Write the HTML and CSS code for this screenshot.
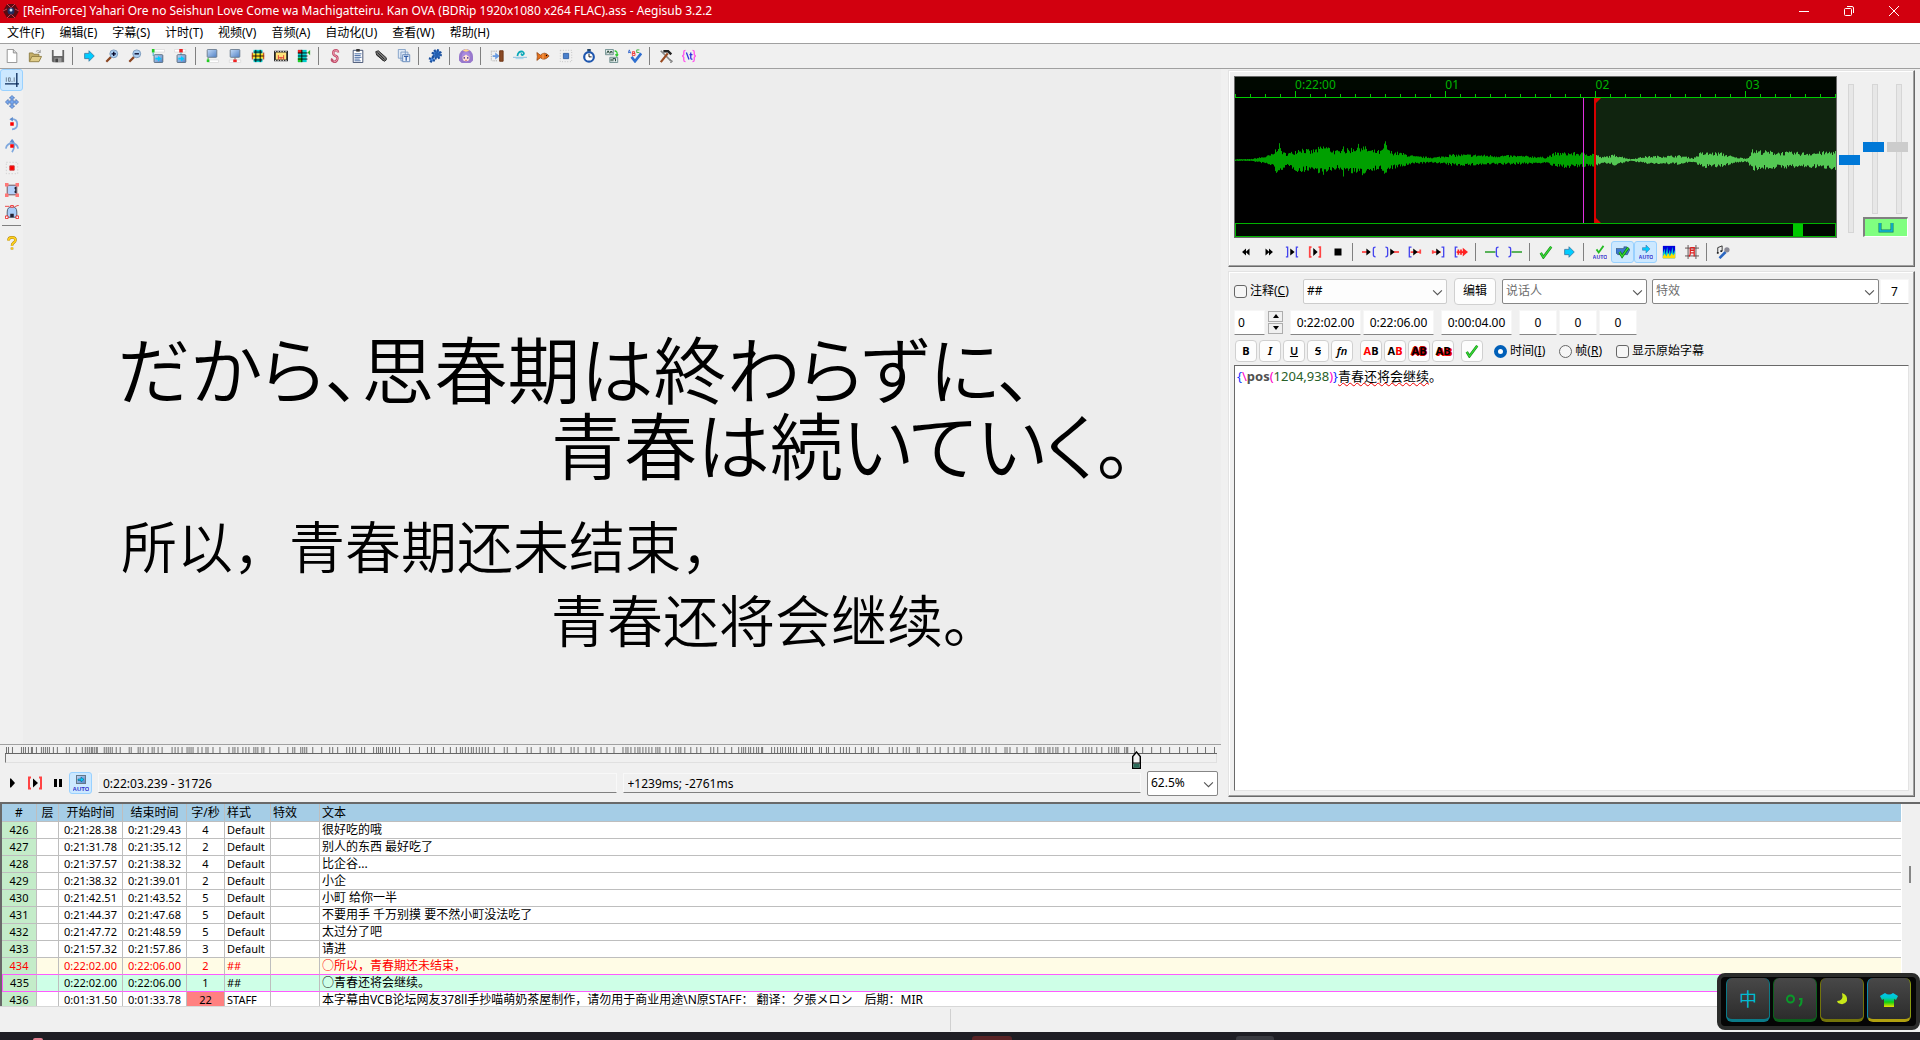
FILE: index.html
```html
<!DOCTYPE html>
<html lang="zh-CN">
<head>
<meta charset="utf-8">
<title>Aegisub 3.2.2</title>
<link rel="stylesheet" href="styles.css">
</head>
<body>
<svg class="defs" aria-hidden="true">
  <defs>
    <linearGradient id="g-blue" x1="0" y1="0" x2="1" y2="1"><stop offset="0" stop-color="#c4dcf8"/><stop offset="1" stop-color="#4f7fc4"/></linearGradient>
    <linearGradient id="g-shirt" x1="0" y1="0" x2="0" y2="1"><stop offset="0" stop-color="#00c8f0"/><stop offset=".35" stop-color="#00c8c8"/><stop offset=".65" stop-color="#10d010"/><stop offset="1" stop-color="#f0e000"/></linearGradient>
  </defs>
  <symbol id="i-arrow" viewBox="0 0 16 16"><path d="M3 5h5V2l6 6-6 6v-3H3z" fill="#00ccff" stroke="#3a7fa8"/></symbol>
  <symbol id="i-check" viewBox="0 0 16 16"><path d="M2 9l3 5L14 2" fill="none" stroke="#178a17" stroke-width="3"/><path d="M2 9l3 5L14 2" fill="none" stroke="#35d835" stroke-width="1.500"/></symbol>
  <symbol id="i-playline" viewBox="0 0 16 16"><path d="M4 2.500H2v11h2M12 2.500h2v11h-2" fill="none" stroke="#f44" stroke-width="2"/><path d="M6 3.500l5 4.500-5 4.500z"/></symbol>
  <symbol id="i-loupe" viewBox="0 0 16 16"><path d="M1.500 14.500L7 9" stroke="#8a4420" stroke-width="2.500"/><circle cx="10" cy="5.500" r="4.500" fill="#a9cdf0" stroke="#7796b8"/></symbol>
  <symbol id="i-chev" viewBox="0 0 10 10"><path d="M1 3l4 4 4-4" fill="none" stroke="#555"/></symbol>
</svg>

<header class="titlebar">
  <svg class="logo" viewBox="0 0 16 16"><path d="M4 1h8l4 7-4 7H4L0 8z" fill="#5a0a10"/><path d="M4 1l4 4 4-4M0 8l4-2M16 8l-4-2M4 15l4-4 4 4" stroke="#d04050" fill="none"/><circle cx="8" cy="8" r="3.500" fill="#222d60"/><circle cx="8" cy="7" r="1.500" fill="#cfe0f0"/></svg>
  <h1>[ReinForce] Yahari Ore no Seishun Love Come wa Machigatteiru. Kan OVA (BDRip 1920x1080 x264 FLAC).ass - Aegisub 3.2.2</h1>
  <button aria-label="最小化"><svg viewBox="0 0 10 10"><path d="M0 5.500h10" stroke="#fff"/></svg></button>
  <button aria-label="还原"><svg viewBox="0 0 10 10"><path d="M.5 3.500q0-1 1-1h5q1 0 1 1v5q0 1-1 1h-5q-1 0-1-1zM3 .5h5q1.500 0 1.500 1.500v5" fill="none" stroke="#fff"/></svg></button>
  <button aria-label="关闭"><svg viewBox="0 0 10 10"><path d="M0 0l10 10M10 0L0 10" stroke="#fff"/></svg></button>
</header>

<nav class="menubar">
  <a href="#">文件(F)</a><a href="#">编辑(E)</a><a href="#">字幕(S)</a><a href="#">计时(T)</a><a href="#">视频(V)</a><a href="#">音频(A)</a><a href="#">自动化(U)</a><a href="#">查看(W)</a><a href="#">帮助(H)</a>
</nav>

<div class="tools main-tools" role="toolbar">
  <button aria-label="新建"><svg viewBox="0 0 16 16"><path d="M2.500.5h7l4 4v11h-11z" fill="#fff" stroke="#888"/><path d="M9.500.5v4h4" fill="#ddd" stroke="#888"/></svg></button>
  <button aria-label="打开"><svg viewBox="0 0 16 16"><path d="M1.500 14V4.500h4l1 1.500h6v3" fill="#c4ae68" stroke="#8c7a40"/><path d="M1.500 14.500l3-6h11l-3 6z" fill="#e0cc88" stroke="#8c7a40"/><path d="M9 3q3-3 5 1m0-3v3h-3" fill="none" stroke="#999"/></svg></button>
  <button aria-label="保存"><svg viewBox="0 0 16 16"><path d="M1 1h14v14H2l-1-1z" fill="#666"/><path d="M3 1h10v7H3z" fill="#f4f4f4"/><path d="M4 10h8v5H4z" fill="#999"/><path d="M5 11h3v4H5z" fill="#444"/></svg></button>
  <i class="sep"></i>
  <button aria-label="跳转"><svg><use href="#i-arrow"/></svg></button>
  <button aria-label="放大"><svg viewBox="0 0 16 16"><use href="#i-loupe"/><path d="M7.500 5.500h5M10 3v5" stroke="#002" stroke-width="1.500"/></svg></button>
  <button aria-label="缩小"><svg viewBox="0 0 16 16"><use href="#i-loupe"/><path d="M7.500 5.500h5" stroke="#002" stroke-width="1.500"/></svg></button>
  <button aria-label="跳到开始"><svg viewBox="0 0 16 16"><path d="M3.500.5h12v3h-12z" fill="#fff" stroke="#ddd"/><path d="M1 0h3v4H1z" fill="#2c2"/><path d="M2.500 4v4" stroke="#2ac"/><rect x="3.500" y="6.500" width="10" height="9" rx="1" fill="url(#g-blue)" stroke="#567"/><path d="M5 10h3V8l4 3-4 3v-2H5z" fill="#0cf"/></svg></button>
  <button aria-label="跳到结束"><svg viewBox="0 0 16 16"><path d="M.5.5h13v3H.5z" fill="#fff" stroke="#ddd"/><path d="M6 0h4v4H6z" fill="#e22"/><path d="M8 4v4" stroke="#2ac"/><rect x="3.500" y="6.500" width="10" height="9" rx="1" fill="url(#g-blue)" stroke="#567"/><path d="M5 10h3V8l4 3-4 3v-2H5z" fill="#0cf"/></svg></button>
  <i class="sep"></i>
  <button aria-label="开始设为当前"><svg viewBox="0 0 16 16"><rect x="2.500" y=".5" width="11" height="9" rx="1" fill="url(#g-blue)" stroke="#678"/><path d="M3.500 10v3" stroke="#2a2"/><path d="M4.500 12.500h11v3h-11z" fill="#fff" stroke="#ddd"/><path d="M2 12h3v3H2z" fill="#2c2"/></svg></button>
  <button aria-label="结束设为当前"><svg viewBox="0 0 16 16"><rect x="2.500" y=".5" width="11" height="9" rx="1" fill="url(#g-blue)" stroke="#678"/><path d="M8 10v3" stroke="#555"/><path d="M1.500 12.500h13v3h-13z" fill="#fff" stroke="#ddd"/><path d="M6 12h4v3H6z" fill="#e22"/></svg></button>
  <button aria-label="选择可见"><svg viewBox="0 0 16 16"><path d="M3 1h10v14H3z" fill="#0cc"/><path d="M1 5h14v6H1z" fill="#fd2"/><path d="M3 3.500h10M1 8h14M3 12.500h10M5.500 1v14M10.500 1v14" stroke="#000"/><path d="M1.500 4v8M14.500 4v8" stroke="#a22"/></svg></button>
  <button aria-label="对齐场景"><svg viewBox="0 0 16 16"><path d="M0 2h16v12H0z" fill="#222"/><path d="M2 4h12v8H2z" fill="#ffe27a"/><path d="M1 3h14M1 13h14" stroke="#fff" stroke-dasharray="1.500 1.500"/><path d="M5 7v5M11 7v5M8 9v3M5 10h6" stroke="#d33"/></svg></button>
  <button aria-label="移位到帧"><svg viewBox="0 0 16 16"><path d="M1 1h10v14H1z" fill="#0cc"/><path d="M1 1h5v4H1z" fill="#e22"/><path d="M1 10h5v5H1z" fill="#2c2"/><path d="M1 4.500h11M1 8h11M1 11.500h11M5.500 1v14" stroke="#000"/><path d="M15 1v6l-3-3z" fill="#2a2"/></svg></button>
  <i class="sep"></i>
  <button aria-label="样式管理"><svg viewBox="0 0 16 16"><path d="M11.500 4q0-3-3-2.500-2.500.5-2.500 3t3 3.500q2.500 1 1.500 4t-4 2.500q-3-1-1.500-3.500" fill="none" stroke="#c0506c" stroke-width="2.800"/><path d="M11.500 4q0-3-3-2.500-2.500.5-2.500 3t3 3.500q2.500 1 1.500 4t-4 2.500" fill="none" stroke="#f4a0b4"/></svg></button>
  <button aria-label="脚本属性"><svg viewBox="0 0 16 16"><path d="M2.500 1.500h11v14h-11z" fill="#fff" stroke="#346"/><path d="M6 0h4v3H6z" fill="#333"/><path d="M4 5.500h8M4 7.500h7M4 9.500h8M4 11.500h6M4 13.500h7" stroke="#335a9a"/></svg></button>
  <button aria-label="附件"><svg viewBox="0 0 16 16"><path d="M2 3l3-1 9 8q1 3-2 4L3 7z" fill="#777" stroke="#222"/><path d="M4 4l8 8M3 6l8 8" stroke="#222"/></svg></button>
  <button aria-label="字体"><svg viewBox="0 0 16 16"><path d="M1.500.5h8v10h-8zM4.500 3.500h8v10h-8z" fill="#dfe9f6" stroke="#7a9ac4"/><path d="M6.500 6.500h8v8h-8z" fill="#e9f1fb" stroke="#5d82b6"/><path d="M8 8.500h5M10.500 8.500v5" stroke="#3560a8" stroke-width="1.500"/></svg></button>
  <i class="sep"></i>
  <button aria-label="自动化"><svg viewBox="0 0 16 16"><circle cx="10" cy="6" r="4.500" fill="#3a7ad0" stroke="#1a4f9c" stroke-width="3" stroke-dasharray="2 1.500"/><circle cx="4.500" cy="12" r="2.500" fill="#4a8ae0" stroke="#1a4f9c" stroke-width="2.500" stroke-dasharray="2 1.500"/><path d="M10 3v6M8 6h5" stroke="#235fb0" stroke-width="3"/></svg></button>
  <i class="sep"></i>
  <button aria-label="助手"><svg viewBox="0 0 16 16"><path d="M0 13Q-1 1 8 0q9 1 8 13l-3 3H3z" fill="#9878cc"/><circle cx="8" cy="10" r="4" fill="#ffe3d6"/><path d="M3 9Q3 3 8 3q5 0 5 6-3 0-5-3-2 3-5 3z" fill="#a98adf"/><path d="M6 9v2M10 9v2" stroke="#5a3a9a" stroke-width="1.500"/><path d="M4 2l4-2 4 2-4 1z" fill="#ffd88a"/><path d="M7 13h2" stroke="#d66"/></svg></button>
  <i class="sep"></i>
  <button aria-label="平移时间"><svg viewBox="0 0 16 16"><path d="M1.500 2v12M3 2.500h5M3 13.500h5" stroke="#999" stroke-dasharray="1 1"/><path d="M3 7h3V4l5 4-5 4V9H3z" fill="#6a9be0"/><path d="M11 2h4v12h-4z" fill="#8a4a26" stroke="#6a3010"/></svg></button>
  <button aria-label="时间后续处理"><svg viewBox="0 0 16 16"><path d="M0 9.500h16" stroke="#78b8dc"/><path d="M5 8q1-6 6-5 3 2 0 4-2 0-1-2" fill="none" stroke="#0aa8b8" stroke-width="2"/><path d="M3 11h9" stroke="#9ad0ec"/></svg></button>
  <button aria-label="卡拉OK计时"><svg viewBox="0 0 16 16"><path d="M1 4l4 3q5-5 10 1-5 6-10 2l-4 3q1-4 0-9z" fill="#e4701c" stroke="#8a3c08" stroke-width=".8"/><path d="M8 5v7" stroke="#fbb46a"/><circle cx="12" cy="7.500" r=".8"/></svg></button>
  <button aria-label="分辨率重设"><svg viewBox="0 0 16 16"><path d="M1.500 1.500h13v13h-13z" fill="none" stroke="#bbb" stroke-dasharray="1 2"/><path d="M5 5h6v6H5z" fill="#4a80cc" stroke="#2f5fa4"/></svg></button>
  <button aria-label="计时"><svg viewBox="0 0 16 16"><path d="M6 0h4v3H6z" fill="#246"/><circle cx="8" cy="9" r="5.500" fill="#fff" stroke="#1e56ae" stroke-width="2.500"/><path d="M8 5.500V9h3" fill="none" stroke="#000"/></svg></button>
  <button aria-label="翻译"><svg viewBox="0 0 16 16"><path d="M.5.500h9v6h-9zM5.500 9.500h9v6h-9z" fill="#dfe9ea" stroke="#688"/><path d="M2 5l1.500-3L5 5M6 5V3h2v2M7 11v3M9 14v-3h3v3" fill="none" stroke="#132"/><path d="M11 2q4 1 2.500 5M12 6l1.500 2L15 6" fill="none" stroke="#3c3" stroke-width="1.500"/></svg></button>
  <button aria-label="拼写检查"><svg viewBox="0 0 16 16"><path d="M4 9l4 5 7-9" fill="none" stroke="#2f6fd0" stroke-width="3"/><path d="M0 5l1.500-4L3 5M.7 4h2" fill="none" stroke="#36c"/><path d="M5 3h2.500v2H5zM5 5h3v2.500H5z" fill="none" stroke="#e33"/><path d="M13 1h-3v3h3" fill="none" stroke="#3a3"/></svg></button>
  <i class="sep"></i>
  <button aria-label="选项"><svg viewBox="0 0 16 16"><path d="M2 2l12 12" stroke="#888" stroke-width="2"/><path d="M12 12l3 2-2 2" fill="none" stroke="#888" stroke-width="1.500"/><path d="M2 15l8-10" stroke="#9a4a20" stroke-width="2.500"/><path d="M5 1h6l4 4-2 2-3-3H5z" fill="#222"/></svg></button>
  <button aria-label="标签显示"><svg viewBox="0 0 16 16"><path d="M4 1.500q-2 0-2 2v3L.5 8 2 9.500v3q0 2 2 2M12 1.500q2 0 2 2v3L15.500 8 14 9.500v3q0 2-2 2" fill="none" stroke="#f5e" stroke-width="1.500"/><path d="M5 4l3 8M10 4v6q0 2 2 1.500M8.500 6.500H12" fill="none" stroke="#33d" stroke-width="1.500"/></svg></button>
</div>

<main class="work">
  <section class="left">
    <div class="stage">
      <div class="side" role="toolbar">
        <button class="on" aria-label="标准"><svg viewBox="0 0 16 16"><path d="M0 12.500h16M13.500 0v16" stroke="#0a2a5a" stroke-width="1.500"/><path d="M1.500 5v5M4 5.500h2v4H4zM8 9v1M10.500 5v5" fill="none" stroke="#678"/></svg></button>
        <button aria-label="拖动"><svg viewBox="0 0 16 16"><path d="M8 .5l3 3H9.200v3.300h3.300V5l3 3-3 3V9.200H9.200v3.300H11l-3 3-3-3h1.800V9.200H3.500V11l-3-3 3-3v1.800h3.300V3.500H5z" fill="#78a8ee" stroke="#456fb0" stroke-width=".8"/></svg></button>
        <button aria-label="旋转Z"><svg viewBox="0 0 16 16"><path d="M7 2q7 0 7 6t-6 6" fill="none" stroke="#7fa8de" stroke-width="2"/><path d="M9 0L5 2.500 9 5z" fill="#5f8ccc"/><path d="M6 6h4v4H6z" fill="#f00"/></svg></button>
        <button aria-label="旋转XY"><svg viewBox="0 0 16 16"><path d="M1 11q1-6 7-6t7 6M8 1q5 7 0 14" fill="none" stroke="#7fa8de" stroke-width="2"/><path d="M5 4l3-4 3 4z" fill="#5f8ccc"/><path d="M6 6h4v4H6z" fill="#f00"/></svg></button>
        <button aria-label="缩放"><svg viewBox="0 0 16 16"><path d="M1.500 1.500h13v13h-13z" fill="none" stroke="#ccc" stroke-dasharray="1.500 2"/><path d="M5.500 5.500h5v5h-5z" fill="#f00" stroke="#c33"/></svg></button>
        <button aria-label="矩形裁剪"><svg viewBox="0 0 16 16"><path d="M2.500 2.500h11v11h-11z" fill="#b4d2fb" stroke="#644"/><path d="M13 4q-4 1-1 4-3 3 1 4z" fill="#223"/><path d="M0 0h4v4H0zM12 0h4v4h-4zM0 12h4v4H0zM12 12h4v4h-4z" fill="#f77"/></svg></button>
        <button aria-label="矢量裁剪"><svg viewBox="0 0 16 16"><path d="M2.500 14V8q0-6 5.500-6t5.500 6v6z" fill="#a9ccf8" stroke="#456"/><path d="M0 1.500h5M11 2l5-2" stroke="#e33"/><path d="M6 10h4v4H6z" fill="#223"/><path d="M6.500.5h3v2h-3zM.5 12.500h3v3h-3zM12.500 12.500h3v3h-3z" fill="#fff" stroke="#e22"/></svg></button>
        <i class="rule"></i>
        <button aria-label="帮助"><svg viewBox="0 0 16 16"><path d="M4 5q0-3.500 4-3.500t4 3q0 2-2.500 3.500Q8 9 8 11M8 13v2.500" fill="none" stroke="#a87c10" stroke-width="3"/><path d="M4 5q0-3.500 4-3.500t4 3q0 2-2.500 3.500Q8 9 8 11M8 13v2.500" fill="none" stroke="#ffd21c" stroke-width="2"/></svg></button>
      </div>
      <div class="video">
        <p class="jp" lang="ja">だから、思春期は終わらずに、</p>
        <p class="jp second" lang="ja">青春は続いていく。</p>
        <p class="cn gap">所以，青春期还未结束，</p>
        <p class="cn second">青春还将会继续。</p>
      </div>
    </div>
    <div class="seek">
      <svg class="keys" viewBox="0 0 1215 7" preserveAspectRatio="none"><path id="keyframes" stroke="#666" fill="none"/></svg>
      <div class="groove"></div>
      <svg class="knob" viewBox="0 0 9 18"><path d="M.7 17.300V5.500L4.500 1l3.800 4.500v11.800z" fill="#f4f4f4" stroke="#000" stroke-width="1.400"/><path d="M1.400 12.500h6.200v4.200H1.400z" fill="#2a6a58"/><path d="M1 12h7" stroke="#000"/></svg>
    </div>
    <div class="transport">
      <button aria-label="播放"><svg viewBox="0 0 16 16"><path d="M6 3.500h1l4 4.500-4 4.500H6z"/></svg></button>
      <button aria-label="播放当前行"><svg><use href="#i-playline"/></svg></button>
      <button aria-label="暂停"><svg viewBox="0 0 16 16"><path d="M4 4h3v8H4zM9 4h3v8H9z"/></svg></button>
      <button class="on" aria-label="自动滚动"><svg viewBox="0 0 16 16"><rect x="3.500" y=".5" width="9" height="8" fill="url(#g-blue)" stroke="#678"/><path d="M5 4h3V2l3 2.500L8 7V5.500H5z" fill="#0cf" stroke="#057" stroke-width=".5"/><text x="8" y="15.500" class="auto">AUTO</text></svg></button>
      <input class="status" aria-label="时间" readonly value="0:22:03.239 - 31726">
      <input class="status" aria-label="偏移" readonly value="+1239ms; -2761ms">
      <span class="combo zoom"><select aria-label="缩放"><option>62.5%</option></select><svg><use href="#i-chev"/></svg></span>
    </div>
  </section>

  <section class="right">
    <div class="frame audio">
      <div class="audio-top">
        <div class="display">
          <div class="ruler"><span></span><span>0:22:00</span><span>01</span><span>02</span><span>03</span></div>
          <svg class="wave" viewBox="0 0 601 133" preserveAspectRatio="none">
            <path d="M360 8h241v125H360z" fill="#10240f"/>
            <path id="ticks" stroke="#00c800" fill="none"/>
            <path d="M0 7.500h601" stroke="#00c800"/>
            <path id="wave-a" stroke="#00a000" fill="none"/>
            <path id="wave-b" stroke="#54c854" fill="none"/>
            <path d="M348.500 8v125" stroke="#e030e0"/>
            <path d="M360 8v125" stroke="#d80000" stroke-width="2"/>
            <path d="M360 8h6l-6 6zM360 127l6 6h-6z" fill="#e00000"/>
          </svg>
          <div class="overview"><i></i></div>
        </div>
        <div class="sliders">
          <label class="vs tall"><input type="range" aria-label="水平缩放"><i></i></label>
          <label class="vs"><input type="range" aria-label="垂直缩放"><i></i></label>
          <label class="vs off"><input type="range" aria-label="音量" disabled><i></i></label>
          <button class="link" aria-label="关联"><svg viewBox="0 0 16 12"><path d="M2 1v8h12V1" fill="none" stroke="#176" stroke-width="3"/><path d="M2 1v8h12V1" fill="none" stroke="#1bd" stroke-width="1.500"/></svg></button>
        </div>
      </div>
      <div class="tools" role="toolbar">
        <button aria-label="上一行"><svg viewBox="0 0 16 16"><path d="M8 4v8L3.500 8zM12 4v8L7.500 8z"/></svg></button>
        <button aria-label="下一行"><svg viewBox="0 0 16 16"><path d="M4 4l4.500 4L4 12zM8 4l4.500 4L8 12z"/></svg></button>
        <button aria-label="播放选区"><svg viewBox="0 0 16 16"><path d="M1 2.500h2v11H1M15 2.500h-2v11h2" fill="none" stroke="#44e" stroke-width="1.500"/><path d="M6 4l5 4-5 4z"/></svg></button>
        <button aria-label="播放当前行"><svg><use href="#i-playline"/></svg></button>
        <button aria-label="停止"><svg viewBox="0 0 16 16"><path d="M4 4h8v8H4z"/></svg></button>
        <i class="sep"></i>
        <button aria-label="选区前"><svg viewBox="0 0 16 16"><path d="M0 8h9" stroke="#f44" stroke-width="2"/><path d="M5 4l5 4-5 4z"/><path d="M15.500 2.500q-2.500 0-2.500 2V8v3.500q0 2 2.500 2" fill="none" stroke="#44e" stroke-width="1.500"/></svg></button>
        <button aria-label="选区后"><svg viewBox="0 0 16 16"><path d="M7 8h9" stroke="#f44" stroke-width="2"/><path d="M6 4l5 4-5 4z"/><path d="M.5 2.500q2.500 0 2.500 2v7q0 2-2.500 2" fill="none" stroke="#44e" stroke-width="1.500"/></svg></button>
        <button aria-label="选区开头"><svg viewBox="0 0 16 16"><path d="M3 8h12M14 5v5" stroke="#f44" stroke-width="2"/><path d="M6 4l5 4-5 4z"/><path d="M4 2.500H1.500v11H4" fill="none" stroke="#44e" stroke-width="1.500"/></svg></button>
        <button aria-label="选区结尾"><svg viewBox="0 0 16 16"><path d="M1 8h10M2 6v4" stroke="#f44" stroke-width="2"/><path d="M6 4l5 4-5 4z"/><path d="M12 2.500h2.500v11H12" fill="none" stroke="#44e" stroke-width="1.500"/></svg></button>
        <button aria-label="播放到末尾"><svg viewBox="0 0 16 16"><path d="M3 8h9M5 5v6M8 5v6" stroke="#f22" stroke-width="2"/><path d="M10 3l6 5-6 5z" fill="#f22"/><path d="M4 2.500H1.500v11H4" fill="none" stroke="#44e" stroke-width="1.500"/></svg></button>
        <i class="sep"></i>
        <button aria-label="前置"><svg viewBox="0 0 16 16"><path d="M0 8h12" stroke="#4a4" stroke-width="2"/><path d="M15.500 2.500q-2.500 0-2.500 2v7q0 2 2.500 2" fill="none" stroke="#44e" stroke-width="1.500"/></svg></button>
        <button aria-label="后置"><svg viewBox="0 0 16 16"><path d="M4 8h12" stroke="#4a4" stroke-width="2"/><path d="M.5 2.500q2.500 0 2.500 2v7q0 2-2.500 2" fill="none" stroke="#44e" stroke-width="1.500"/></svg></button>
        <i class="sep"></i>
        <button aria-label="提交"><svg><use href="#i-check"/></svg></button>
        <button aria-label="转到"><svg><use href="#i-arrow"/></svg></button>
        <i class="sep"></i>
        <button aria-label="自动提交"><svg viewBox="0 0 16 16"><path d="M4 5l2.500 3.500L12 1" fill="none" stroke="#2b2" stroke-width="2"/><text x="8" y="15.500" class="auto">AUTO</text></svg></button>
        <button class="on" aria-label="自动下一行"><svg viewBox="0 0 16 16"><path d="M0 4h9V2h3l4 3-3 6H2l-2-2z" fill="#3d78d0" stroke="#234" stroke-width=".5"/><path d="M4 8l3 5 7-10" fill="none" stroke="#171" stroke-width="3"/><path d="M4 8l3 5 7-10" fill="none" stroke="#3d3" stroke-width="1.500"/></svg></button>
        <button class="on" aria-label="自动滚动"><svg viewBox="0 0 16 16"><path d="M4 3h4V0l4.500 4.500L8 9V6H4z" fill="#0cf" stroke="#47a" stroke-width=".7"/><text x="8" y="15.500" class="auto">AUTO</text></svg></button>
        <button aria-label="频谱"><svg viewBox="0 0 16 16"><path d="M1 1h14v14H1z" fill="#00d"/><path d="M1 15v-5l2-6 1 7 2-9 1 9 2-6 1 6 2-9 1 8 2-5v10z" fill="#0cc"/><path d="M1 15v-2l2-3 2 3 2-4 2 4 2-4 2 3 2-3v6z" fill="#fd0"/></svg></button>
        <button aria-label="卡拉OK"><svg viewBox="0 0 16 16"><path d="M3.500 0v16M12.500 0v16M0 3.500h16M0 12.500h16" stroke="#544"/><path d="M6 3h4.500v10M6 3v6q0 3-1.500 4M6 6h4.500M6 9h4.500" fill="none" stroke="#d22" stroke-width="1.500"/></svg></button>
        <i class="sep"></i>
        <button aria-label="卡拉OK模式"><svg viewBox="0 0 16 16"><path d="M2 9V3l5-2v6" fill="none" stroke="#222"/><path d="M1 9h2M5 7h2" stroke="#222" stroke-width="2"/><path d="M4 15l7-7" stroke="#2a66c0" stroke-width="3"/><circle cx="12.500" cy="5.500" r="3" fill="#8a8a96"/></svg></button>
      </div>
    </div>

    <form class="frame edit">
      <div class="row one">
        <label class="tick"><input type="checkbox"><span>注释(<u>C</u>)</span></label>
        <span class="combo pale style"><select aria-label="样式"><option>##</option></select><svg><use href="#i-chev"/></svg></span>
        <button type="button" class="btn">编辑</button>
        <span class="combo hint actor"><select aria-label="说话人"><option>说话人</option></select><svg><use href="#i-chev"/></svg></span>
        <span class="combo hint effect"><select aria-label="特效"><option>特效</option></select><svg><use href="#i-chev"/></svg></span>
        <input class="field n28" aria-label="字符数" readonly value="7">
      </div>
      <div class="row two">
        <input class="field layer" aria-label="层" value="0">
        <span class="spin"><button type="button" aria-label="增加"><svg viewBox="0 0 6 4"><path d="M0 4l3-4 3 4z"/></svg></button><button type="button" aria-label="减少"><svg viewBox="0 0 6 4"><path d="M0 0h6L3 4z"/></svg></button></span>
        <span class="group"><input class="field time" aria-label="开始时间" value="0:22:02.00"><input class="field time" aria-label="结束时间" value="0:22:06.00"></span>
        <input class="field time" aria-label="持续时间" value="0:00:04.00">
        <span class="group"><input class="field n38" aria-label="左边距" value="0"><input class="field n38" aria-label="右边距" value="0"><input class="field n38" aria-label="垂直边距" value="0"></span>
      </div>
      <div class="row three">
        <span class="group"><button type="button" class="fmt"><b>B</b></button><button type="button" class="fmt"><em>I</em></button><button type="button" class="fmt"><u>U</u></button><button type="button" class="fmt"><s>S</s></button><button type="button" class="fmt"><em>fn</em></button></span>
        <span class="group"><button type="button" class="fmt"><b><span class="red">A</span>B</b></button><button type="button" class="fmt"><b>A<span class="red">B</span></b></button><button type="button" class="fmt"><b class="outl">AB</b></button><button type="button" class="fmt"><b class="shad">AB</b></button></span>
        <button type="button" class="fmt" aria-label="提交"><svg><use href="#i-check"/></svg></button>
        <label class="tick"><input type="radio" name="unit" checked><span>时间(<u>I</u>)</span></label>
        <label class="tick"><input type="radio" name="unit"><span>帧(<u>R</u>)</span></label>
        <label class="tick"><input type="checkbox"><span>显示原始字幕</span></label>
      </div>
      <div class="editor" role="textbox" aria-label="字幕文本" contenteditable="true" spellcheck="false"><span class="brace">{</span><span class="slash">\</span><b>pos</b><span class="slash">(</span><span class="num">1204,938</span><span class="slash">)</span><span class="brace">}</span><span class="wavy">青春还将会继续</span>。</div>
    </form>
  </section>
</main>

<section class="grid">
  <table>
    <colgroup><col class="c1"><col class="c2"><col class="c3"><col class="c3"><col class="c5"><col class="c6"><col class="c7"><col></colgroup>
    <thead><tr><th>#</th><th>层</th><th>开始时间</th><th>结束时间</th><th>字/秒</th><th class="l">样式</th><th class="l">特效</th><th class="l">文本</th></tr></thead>
    <tbody>
      <tr><td>426</td><td></td><td>0:21:28.38</td><td>0:21:29.43</td><td>4</td><td>Default</td><td></td><td>很好吃的哦</td></tr>
      <tr><td>427</td><td></td><td>0:21:31.78</td><td>0:21:35.12</td><td>2</td><td>Default</td><td></td><td>别人的东西 最好吃了</td></tr>
      <tr><td>428</td><td></td><td>0:21:37.57</td><td>0:21:38.32</td><td>4</td><td>Default</td><td></td><td>比企谷...</td></tr>
      <tr><td>429</td><td></td><td>0:21:38.32</td><td>0:21:39.01</td><td>2</td><td>Default</td><td></td><td>小企</td></tr>
      <tr><td>430</td><td></td><td>0:21:42.51</td><td>0:21:43.52</td><td>5</td><td>Default</td><td></td><td>小町 给你一半</td></tr>
      <tr><td>431</td><td></td><td>0:21:44.37</td><td>0:21:47.68</td><td>5</td><td>Default</td><td></td><td>不要用手 千万别摸 要不然小町没法吃了</td></tr>
      <tr><td>432</td><td></td><td>0:21:47.72</td><td>0:21:48.59</td><td>5</td><td>Default</td><td></td><td>太过分了吧</td></tr>
      <tr><td>433</td><td></td><td>0:21:57.32</td><td>0:21:57.86</td><td>3</td><td>Default</td><td></td><td>请进</td></tr>
      <tr class="clash"><td>434</td><td></td><td>0:22:02.00</td><td>0:22:06.00</td><td>2</td><td>##</td><td></td><td>○所以，青春期还未结束，</td></tr>
      <tr class="current"><td>435</td><td></td><td>0:22:02.00</td><td>0:22:06.00</td><td>1</td><td>##</td><td></td><td>○青春还将会继续。</td></tr>
      <tr><td>436</td><td></td><td>0:01:31.50</td><td>0:01:33.78</td><td class="fast">22</td><td>STAFF</td><td></td><td>本字幕由VCB论坛网友378ll手抄喵萌奶茶屋制作，请勿用于商业用途\N原STAFF： 翻译：夕張メロン　后期：MIR</td></tr>
    </tbody>
  </table>
  <div class="scroll"><i></i></div>
</section>

<footer class="statusbar"><span></span><span></span></footer>
<div class="taskbar"><i class="pink"></i><i class="rust"></i><i class="slate"></i></div>

<div class="ime">
  <button class="k1">中</button>
  <button class="k2" aria-label="标点"><svg viewBox="0 0 20 18"><circle cx="5.500" cy="9" r="3.500" fill="none" stroke="#0a9a2a" stroke-width="2"/><path d="M14 9h2.500v2q0 4-2.500 5" fill="none" stroke="#0a9a2a" stroke-width="2"/></svg></button>
  <button class="k3" aria-label="夜间"><svg viewBox="0 0 20 18"><path d="M10 3q6 2 5 8-3 5-9 2l-1-2q7 0 5-8z" fill="#c8e818"/></svg></button>
  <button class="k4" aria-label="皮肤"><svg viewBox="0 0 20 18"><path d="M6 3q4 3 8 0l5 3-2 4-2-1v8H5V9l-2 1-2-4z" fill="url(#g-shirt)"/></svg></button>
</div>
<script src="script.js"></script>
</body>
</html>
```

FILE: styles.css
```css
* { box-sizing: border-box; }
html, body { height: 100%; }
body {
  margin: 0;
  display: flex;
  flex-direction: column;
  overflow: hidden;
  background: #f0f0f0;
  color: #000;
  font: 12px/16px "Noto Sans", "Noto Sans CJK SC", sans-serif;
}
button, input, select { font: inherit; color: inherit; margin: 0; padding: 0; border: 0; background: none; }
p, h1 { margin: 0; font-weight: 400; }
i { font-style: normal; }
svg { display: block; }
.defs { position: absolute; width: 0; height: 0; }
.auto { font: bold 6px "Liberation Sans", sans-serif; fill: #33c; text-anchor: middle; }

/* window chrome */
.titlebar { flex: none; height: 23px; display: flex; align-items: center; background: #d2000f; color: #fff; padding: 0 4px 1px 3px; }
.logo { width: 16px; height: 18px; margin-right: 4px; }
.titlebar h1 { flex: 1; font-size: 12px; line-height: 16px; white-space: nowrap; }
.titlebar button { width: 45px; height: 22px; display: grid; place-items: center; }
.titlebar button svg { width: 10px; height: 10px; }
.menubar { flex: none; height: 20px; display: flex; align-items: center; gap: 15px; padding-left: 7px; background: #fff; }
.menubar a { color: inherit; text-decoration: none; }

/* toolbars */
.tools { display: flex; align-items: center; }
.main-tools { flex: none; height: 26px; border-top: 1px solid #a0a0a0; border-bottom: 1px solid #a0a0a0; }
.tools button, .side button, .transport button { flex: none; width: 23px; height: 22px; display: grid; place-items: center; border: 1px solid transparent; border-radius: 3px; }
.tools svg, .side svg { width: 14px; height: 14px; }
.transport button svg { width: 16px; height: 16px; }
.tools .on, .side .on, .transport .on { background: #cce8ff; border-color: #99d1ff; }
.sep { flex: none; width: 8px; height: 18px; background: linear-gradient(#808080, #808080) 3px 0 / 1px 100% no-repeat; }

/* work area */
.work { flex: 1; min-height: 0; display: grid; grid-template-columns: minmax(0, 1223fr) minmax(0, 697fr); }
.left { display: flex; flex-direction: column; min-height: 0; padding: 0 2px 6px 0; }
.stage { flex: 1; min-height: 0; display: flex; border-bottom: 1px solid #a0a0a0; }
.side { width: 23px; display: flex; flex-direction: column; }
.side .rule { height: 1px; margin: 2px 2px 6px; background: #808080; }
.video { flex: 1; min-width: 0; padding: 259px 0 0 94px; background: #ededed; white-space: nowrap; overflow: hidden; }
.jp { font: 350 73px/76px "Noto Sans CJK JP", sans-serif; font-feature-settings: "palt"; }
.cn { font: 350 56px/74px "Noto Sans CJK SC", sans-serif; padding-left: 4px; }
.video .second { padding-left: 434px; }
.gap { padding-top: 27px; }

.seek { position: relative; flex: none; height: 25px; padding: 2px 4px 0 5px; }
.keys { width: 100%; height: 7px; border-bottom: 1px solid #666; }
.groove { height: 9px; border: solid #e0e0e0; border-width: 0 1px 1px; border-left-color: #777; }
.knob { position: absolute; left: 93%; bottom: 1px; width: 9px; height: 18px; margin-left: -4px; }
.transport { flex: none; height: 26px; display: flex; align-items: center; }
.status { flex: 1; min-width: 0; height: 20px; margin-left: 6px; padding: 0 4px; border: solid #f8f8f8; border-width: 1px; border-bottom-color: #808080; }
.transport .combo { width: 71px; margin: 0 3px 0 6px; }

.right { display: flex; flex-direction: column; min-height: 0; gap: 4px; padding: 1px 5px 5px 5px; }
.frame { border: 1px solid; border-color: #e3e3e3 #696969 #696969 #e3e3e3; box-shadow: inset -1px -1px #a0a0a0, inset 1px 1px #fff; padding: 5px; }
.audio { flex: none; height: 197px; }
.audio-top { display: flex; gap: 2px; }
.display { flex: 1; min-width: 0; height: 162px; display: flex; flex-direction: column; background: #000; border: 1px solid #696969; }
.ruler { display: flex; height: 13px; background: #000800; color: #00b400; }
.ruler span { width: 25%; flex: none; }
.ruler span:first-child { width: 10%; }
.ruler span:last-child { width: 15%; }
.wave { width: 100%; height: 133px; }
.overview { height: 14px; border: 1px solid #00b400; background: #000800; }
.overview i { display: block; width: 10px; height: 100%; margin-left: 93%; background: #00c800; }
.sliders { flex: none; width: 70px; height: 162px; display: grid; grid-template: 133px 20px / 21px 21px 21px; column-gap: 3px; row-gap: 8px; }
.vs { position: relative; height: 128px; margin-top: 8px; }
.vs.tall { height: 147px; }
.vs::before { content: ""; position: absolute; left: 9px; top: 0; width: 4px; height: 100%; background: #e7e7e7; border: 1px solid #d6d6d6; }
.vs i { position: absolute; left: 0; top: 58px; width: 21px; height: 10px; background: #0078d7; }
.vs.tall i { top: 71px; }
.vs.off i { background: #ccc; }
.vs input { position: absolute; inset: 0; width: 100%; height: 100%; opacity: 0; }
.link { grid-column: 2 / 4; grid-row: 2; background: #80ff80; border: solid; border-width: 2px 1px 1px 2px; border-color: #808080 #fff #fff #808080; display: grid; place-items: center; }
.link svg { width: 16px; height: 12px; }
.audio .tools { height: 27px; }

/* edit box */
.edit { flex: 1; min-height: 0; display: flex; flex-direction: column; padding-top: 4px; }
.row { flex: none; display: flex; align-items: center; }
.one { height: 30px; gap: 7px; }
.two { height: 31px; gap: 7px; padding-top: 1px; }
.three { height: 28px; gap: 7px; padding-left: 1px; }
.group { display: flex; gap: 2px; }
.tick { display: flex; align-items: center; gap: 3px; white-space: nowrap; }
.tick input { appearance: none; width: 13px; height: 13px; border: 1px solid #666; border-radius: 3px; background: #f6f6f6; }
.tick input[type="radio"] { border-radius: 50%; }
.tick input[type="radio"]:checked { border: 4px solid #005fb8; background: #fff; }
.one .tick { width: 62px; }
.three .tick { margin-left: 4px; }
.three .tick + .tick { margin-left: 7px; }
.combo { position: relative; display: block; height: 25px; background: #fff; border: 1px solid #868686; border-radius: 2px; }
.combo.pale { border-color: #ccc; background: #fdfdfd; }
.combo select { appearance: none; width: 100%; height: 100%; padding: 0 3px; }
.combo svg { position: absolute; right: 3px; top: 7px; width: 11px; height: 11px; pointer-events: none; }
.hint { color: #6d6d6d; }
.style { width: 144px; }
.actor { width: 145px; }
.effect { flex: 1; margin: 0 -6px 0 -2px; }
.btn { width: 42px; height: 27px; background: #fdfdfd; border: 1px solid #d0d0d0; border-radius: 4px; }
.one .btn { margin-right: -1px; }
.field { height: 25px; background: #fff; border: 1px solid #f6f6f6; border-bottom-color: #868686; text-align: center; }
.n28 { width: 29px; }
.n38 { width: 38px; }
.layer { width: 31px; padding-left: 3px; text-align: left; }
.time { width: 71px; }
.spin { display: flex; flex-direction: column; gap: 1px; width: 15px; margin-left: -4px; }
.spin button { height: 11px; display: grid; place-items: center; background: #f0f0f0; border: 1px solid #adadad; }
.spin svg { width: 6px; height: 4px; }
.fmt { flex: none; width: 22px; height: 22px; background: #fdfdfd; border: 1px solid #d0d0d0; border-radius: 4px; font-size: 11px; line-height: 16px; display: grid; place-items: center; }
.fmt em, .fmt u, .fmt s { font-weight: 600; }
.fmt svg { width: 14px; height: 14px; }
.red { color: #f00; }
.outl { text-shadow: 1px 0 #c00, -1px 0 #c00, 0 1px #c00, 0 -1px #c00; }
.shad { text-shadow: 1px 1px #e00, 2px 1px #e00; }
.editor { flex: 1; min-height: 0; padding: 1px 2px; background: #fff; border: 1px solid; border-color: #696969 #e3e3e3 #e3e3e3 #696969; outline: 1px solid #f0f0f0; font-size: 13px; line-height: 18px; }
.editor b { color: #505050; }
.brace { color: #1432ff; }
.slash { color: #ff00c8; }
.num { color: #286028; }
.wavy { text-decoration: underline wavy #e00 1px; text-underline-offset: 1px; }

/* subtitle grid */
.grid { flex: none; height: 204px; display: flex; overflow: hidden; border: solid #696969; border-width: 2px 0 0 2px; background: #fff; }
table { flex: 1; min-width: 0; table-layout: fixed; border-spacing: 0; align-self: flex-start; white-space: nowrap; }
.c1 { width: 35px; } .c2 { width: 22px; } .c3 { width: 64px; } .c5 { width: 38px; } .c6 { width: 46px; } .c7 { width: 49px; }
th, td { height: 17px; padding: 0; border: solid #bebebe; border-width: 0 1px 1px 0; line-height: 15px; text-align: center; vertical-align: top; overflow: hidden; }
th { height: 18px; background: #a5cde6; font-weight: 400; font-size: 12px; line-height: 17px; }
td { font-size: 11px; }
th.l, td:nth-child(n+6) { text-align: left; padding-left: 2px; }
td:last-child { font-size: 12px; }
th:last-child, td:last-child { border-right: 0; }
td:first-child { background: #c4ecc9; }
.clash td { color: #f00; border-bottom-color: #ff5aff; }
.clash td:not(:first-child) { background: #fffce6; }
.current td { border-bottom-color: #ff5aff; }
.current td:not(:first-child) { background: #ceffe7; }
.current td:first-child { border-left: 1px solid #ff5aff; }
td.fast { background: #ff8080; }
.scroll { flex: none; width: 19px; background: #f0f0f0; border-left: 1px solid #fff; display: flex; padding: 62px 0 0 7px; }
.scroll i { width: 2px; height: 17px; background: #868686; }

.statusbar { flex: none; height: 26px; display: flex; border-top: 1px solid #d7d7d7; padding-top: 2px; }
.statusbar span { flex: 1; }
.statusbar span:first-child { flex: 0 0 951px; height: 22px; border-right: 1px solid #d0d0d0; }
.taskbar { flex: none; height: 8px; display: flex; align-items: flex-end; background: #1f1e24; padding-left: 33px; }
.pink { width: 10px; height: 2px; background: #e08090; border-radius: 5px 5px 0 0; }
.rust { width: 40px; height: 4px; margin-left: 929px; background: #5a2426; border-radius: 3px 3px 0 0; }
.slate { width: 38px; height: 4px; margin-left: 224px; background: #3a3a40; border-radius: 3px 3px 0 0; }

/* floating input-method bar */
.ime { position: absolute; right: 0; bottom: 10px; display: flex; gap: 3px; height: 57px; padding: 1px 5px 4px; background: #050505; border: 4px solid #2b2c2b; border-radius: 8px; }
.ime button { width: 44px; height: 44px; display: grid; place-items: center; background: linear-gradient(#484848, #2c2c2c); border-radius: 6px; border: 1px solid; border-width: 0 1px 3px; }
.ime svg { width: 20px; height: 18px; }
.ime .k1 { font-size: 18px; line-height: 24px; color: #00bcd4; border-color: #0b7a88; }
.ime .k2 { border-color: #0b5f1b; }
.ime .k3 { border-color: #74740a; }
.ime .k4 { border-color: #0a8ab0 #8a9a10 #b0a010 #0a8ab0; }
```

FILE: script.js
```js
// Keyframe positions on the seek bar.
const third = [17,24,35,62,68,74,83,92,97,107,123,129,136,142,148,158,172,199,206,229,247,255,261,267,272,277,282,287,292,313,319,325,331,337,347,359,386,392,414,421,430,443,457,462,474,487,515,525,535,546,562,567,574,579,595,607,617,625,638,661,688,698,704,715,728,738,746,762,768,775,785,793,811,838,865,880,886,902,908,914,920,940,965,991,998,1013,1042,1049,1060,1068,1085,1096,1123,1130,1136,1142,1150,1160,1170,1178,1188].map(v => v / 3);
const middle = [871,893,915,932,940,948,967,983,996,1003,1009,1015,1021,1027,1033,1039,1045,1052,1058,1065,1078,1099,1106,1125,1150,1158,1179,1195,1203,1209,1225,1246,1253,1260,1279,1290,1296,1312,1325,1340,1358,1365,1371,1377,1385,1391,1397,1403,1409,1416,1422,1430,1436,1440,1453,1462,1475,1480,1485,1494,1507,1521,1530,1550,1557,1565].map(v => v / 2.178);
const last = [283,297,314,320,325,330,335,341,347,353,358,364,368,388,395,400,407,412,418,425,430,437,443,454,461,467,475,480,495,500,511,516,528,541,548,555,563,575,590,605,611,617,628,652,658,670,683,690,696,714,720,738,754,766,785,797,811,817,822,838,845,861,868,875,892,912,917,922,938,955,960,981,988,993,1000,1007,1013,1019,1026,1031,1043,1055,1071,1087,1093,1100,1106,1118,1128,1144,1152,1158,1163,1168,1180,1184,1188,1203,1221,1241,1262,1281,1303,1322,1343,1362,1381].map(v => 600 + v / 2.24);
document.getElementById('keyframes').setAttribute('d',
  [...third, ...middle, ...last].map(x => `M${Math.round(x) - 5 + 0.5} 0v7`).join(''));

// Audio timeline ticks: one each tenth of a second, longer on the second.
let ticks = '';
for (let k = 0; k <= 40; k++) {
  const major = k % 10 === 4;
  ticks += `M${k * 15 + 0.5} ${major ? 1 : 4}V7`;
}
document.getElementById('ticks').setAttribute('d', ticks);

// Waveform envelope: [x, amplitude].
const env = [[0,1],[15,1],[30,4],[38,7],[43,19],[48,8],[55,8],[65,14],[75,10],[90,16],[100,10],[104,10],[107,20],[110,11],[125,17],[135,11],[146,10],[150,20],[154,10],[165,8],[180,4],[200,3],[215,6],[235,6],[260,5],[275,5],[300,4],[310,3],[320,8],[345,8],[360,7],[366,3],[380,6],[395,1],[410,4],[445,5],[458,2],[465,8],[485,8],[500,3],[512,2],[517,11],[540,9],[570,8],[590,9],[601,10]];
let seed = 7;
const rand = () => (seed = (seed * 16807) % 2147483647) / 2147483647;
const wave = ['', ''];
for (let x = 0, i = 0; x < 601; x++) {
  while (x > env[i + 1][0]) i++;
  const [x0, a0] = env[i], [x1, a1] = env[i + 1];
  const a = a0 + (a1 - a0) * (x - x0) / (x1 - x0);
  const up = Math.max(0.5, a * (0.5 + rand() * 0.5));
  const down = Math.max(0.5, a * (0.5 + rand() * 0.5));
  wave[x < 360 ? 0 : 1] += `M${x + 0.5} ${(70 - up).toFixed(1)}V${(70 + down).toFixed(1)}`;
}
document.getElementById('wave-a').setAttribute('d', wave[0]);
document.getElementById('wave-b').setAttribute('d', wave[1]);
```
